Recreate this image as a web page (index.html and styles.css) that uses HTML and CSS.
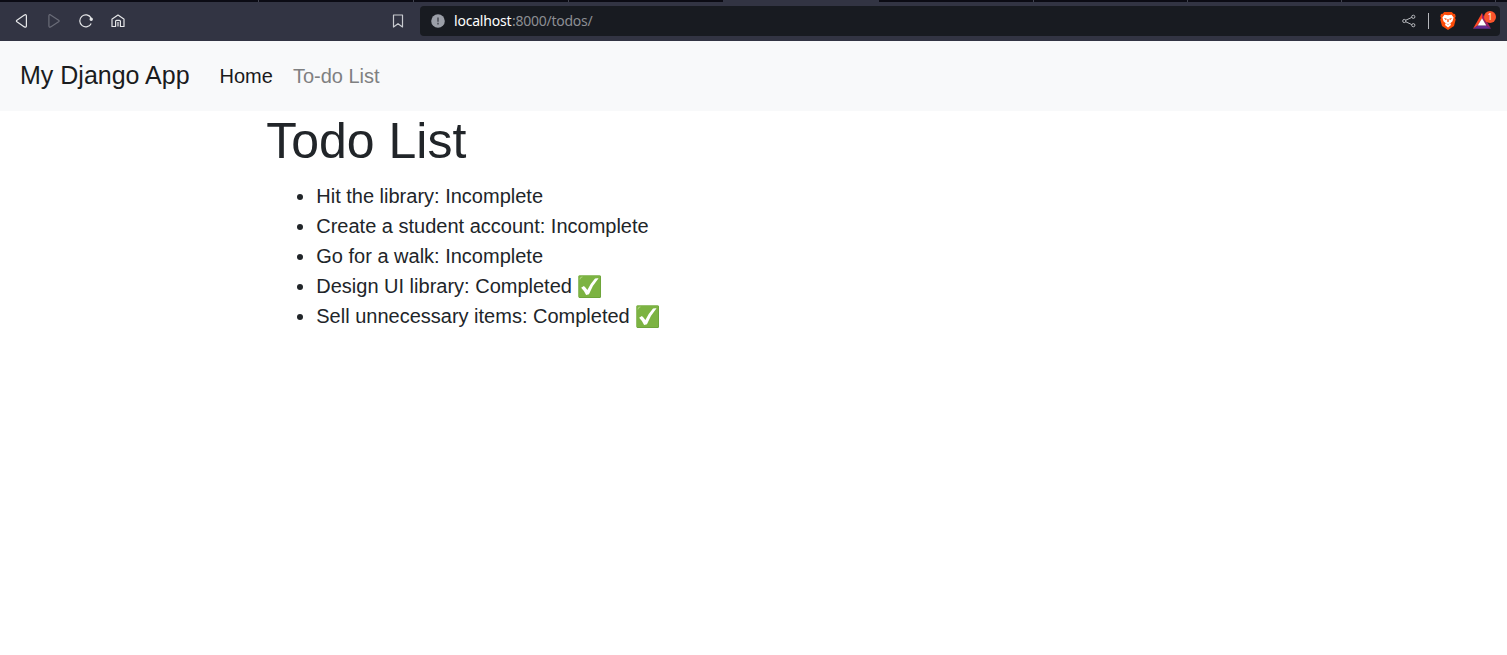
FILE: index.html
```html
<!DOCTYPE html>
<html lang="en">
<head>
<meta charset="utf-8">
<title>Todo List</title>
<link rel="stylesheet" href="styles.css">
</head>
<body>
<div class="tabs"><i class="tab first"></i><i class="tab"></i><i class="tab"></i><i class="tab before-active"></i><i class="tab active"></i><i class="tab"></i><i class="tab late"></i><i class="tab late"></i><i class="tab late"></i><i class="tab rest"></i></div>
<header class="toolbar">
  <div class="controls">
    <svg class="icon" viewBox="0 0 16 16"><path d="M2.9 7.2 10.4 2.1Q12.4 1 12.4 3V12.8Q12.4 14.8 10.4 13.9L2.9 8.7Q1.9 7.9 2.9 7.2Z"/></svg>
    <svg class="icon disabled" viewBox="0 0 16 16"><path d="M12.6 7.2 4.6 1.9Q2.9 1 2.9 3V12.8Q2.9 14.8 4.6 13.9L12.6 8.7Q13.7 7.9 12.6 7.2Z"/></svg>
    <svg class="icon" viewBox="0 0 16 16"><path d="M13 4.9A6 6 0 1 0 13.2 10.4"/><circle class="solid" cx="13.2" cy="6.2" r="1.1"/></svg>
    <svg class="icon" viewBox="0 0 16 16"><path d="M1.8 6.3 8 2 14.2 6.3M2 6V13.5H5.6V8.3Q5.6 7.4 6.5 7.4H9.5Q10.4 7.4 10.4 8.3V13.5H14V6M8 9V13.5"/></svg>
  </div>
  <svg class="icon bookmark" viewBox="0 0 16 16"><path d="M3.5 2H12.5V14L8 10.7 3.5 14Z"/></svg>
  <div class="address">
    <svg class="info" viewBox="0 0 14 14"><circle cx="7" cy="7" r="6.8" fill="#9b9fa8"/><path d="M6 3.5H8V7.8H6ZM6 8.8H8V10.5H6Z" fill="#5b5e67"/></svg>
    <span class="url"><span class="host">localhost</span><span class="path">:8000/todos/</span></span>
    <svg class="share" viewBox="0 0 14 14"><path d="M3.6 6.3 9.8 3.4M3.6 7.7 9.8 10.6"/><circle cx="2.3" cy="7" r="1.6"/><circle cx="11.3" cy="2.8" r="1.6"/><circle cx="11.3" cy="11.2" r="1.6"/></svg>
    <span class="divider"></span>
    <svg class="shield" viewBox="0 0 16 18"><path fill="#fb4b08" d="M4.2 0H11.8L13.4 1.7 15 2 15.7 4.5 15 6 15.7 7.5 14 14 8 18 2 14 .3 7.5 1 6 .3 4.5 1 2 2.6 1.7Z"/><path fill="#fff" d="M4.5 2.7 8 3.3 11.5 2.7 13.6 5.4 12.5 9.2 10.3 11.2 11 13 8 15.5 5 13 5.7 11.2 3.5 9.2 2.4 5.4Z"/><path fill="#fb4b08" d="M3.9 6 6.8 6.7 6 8.3ZM12.1 6 9.2 6.7 10 8.3ZM7.5 7H8.5L8.8 9.5 8 10.2 7.2 9.5ZM5.8 11.3 8 12.2 10.2 11.3 8 12.7Z"/></svg>
    <div class="rewards">
      <svg class="bat" viewBox="0 0 18 16"><path fill="#ff4724" d="M9 0V5.2L4.6 12.8 0 15.7Z"/><path fill="#9e1f63" d="M9 0 18 15.7 13.4 12.8 9 5.2Z"/><path fill="#662d91" d="M0 15.7 4.6 12.4H13.4L18 15.7Z"/><path fill="#fff" d="M9 5.2 13.3 12.4H4.7Z"/></svg>
      <span class="badge">1</span>
    </div>
  </div>
</header>
<nav class="navbar">
  <a class="brand">My Django App</a>
  <a class="link current">Home</a>
  <a class="link">To-do List</a>
</nav>
<main class="container">
  <h1>Todo List</h1>
  <ul>
    <li>Hit the library: Incomplete</li>
    <li>Create a student account: Incomplete</li>
    <li>Go for a walk: Incomplete</li>
    <li>Design UI library: Completed <svg class="check" viewBox="0 0 24 24"><rect x=".5" y=".5" width="23" height="23" rx="1.2" fill="#689f38"/><rect x=".5" y=".5" width="22.3" height="22.3" rx="1" fill="#7cb342"/><path d="M2 4.5Q2 2 4.5 2" stroke="#aed581" fill="none"/><path fill="#fff" d="M3.2 13 6 11.2Q7.4 12 9.6 15.3 12.8 8.8 17.4 3.7 19.2 3 21 3.4 14.7 10.6 11.2 19.7L8.3 20.3Q6.3 16 3.2 13Z"/></svg></li>
    <li>Sell unnecessary items: Completed <svg class="check" viewBox="0 0 24 24"><rect x=".5" y=".5" width="23" height="23" rx="1.2" fill="#689f38"/><rect x=".5" y=".5" width="22.3" height="22.3" rx="1" fill="#7cb342"/><path d="M2 4.5Q2 2 4.5 2" stroke="#aed581" fill="none"/><path fill="#fff" d="M3.2 13 6 11.2Q7.4 12 9.6 15.3 12.8 8.8 17.4 3.7 19.2 3 21 3.4 14.7 10.6 11.2 19.7L8.3 20.3Q6.3 16 3.2 13Z"/></svg></li>
  </ul>
</main>
</body>
</html>
```
FILE: styles.css
```css
* { box-sizing: border-box; }
body { margin: 0; background: #fff; color: #212529; font: 20px/30px "Liberation Sans", Arial, sans-serif; }
.tabs { display: flex; height: 2px; background: #0b0b14; }
.tab { width: 155px; flex: none; border-right: 1px solid #41434f; }
.tab.first { width: 259px; }
.tab.before-active { width: 154px; border: 0; }
.tab.active { width: 156px; background: #323443; border: 0; }
.tab.late { width: 154px; }
.tab.rest { flex: 1; width: auto; border: 0; }
.toolbar { display: flex; align-items: center; height: 39px; padding: 0 7px 1px 14px; background: #323443; }
.controls { display: flex; gap: 16px; }
.icon { display: block; width: 16px; height: 16px; fill: none; stroke: #e6e7e9; stroke-width: 1.2; stroke-linejoin: round; }
.icon.disabled { stroke: #6a6c78; }
.icon .solid { fill: #e6e7e9; }
.bookmark { margin-left: 264px; stroke: #c9cbd0; }
.address { display: flex; align-items: center; flex: 1; height: 30px; margin-left: 14px; padding: 0 4px 0 11px; background: #181b21; border-radius: 4px; }
.info { width: 14px; height: 14px; }
.url { display: flex; margin-left: 9px; flex: 1; font: 14px/20px "Noto Sans", sans-serif; }
.host { width: 58px; color: #fff; letter-spacing: -.2px; }
.path { color: #8c8e93; letter-spacing: -.26px; }
.share { width: 14px; height: 14px; fill: none; stroke: #b6b8bc; stroke-width: 1; }
.divider { width: 1px; height: 16px; margin: 0 11px 0 12px; background: #b6b8bc; }
.shield { width: 16px; height: 18px; }
.rewards { position: relative; width: 23px; height: 20px; margin-left: 17px; }
.bat { display: block; width: 18px; height: 16px; margin-top: 2px; }
.badge { position: absolute; left: 11px; top: 0; width: 12px; height: 12px; border-radius: 50%; background: #fb542b; color: #fff; font: 8px/12px "Noto Sans", sans-serif; text-align: center; }
.navbar { display: flex; align-items: center; height: 70px; padding: 0 20px; background: #f8f9fa; }
.brand { margin-right: 30px; padding-bottom: 2px; font-size: 25px; line-height: 38px; color: #1a1c1e; }
.link { margin-right: 20px; color: #7f8081; }
.link.current { color: #1a1a1b; }
.container { width: 974.5px; margin: 0 auto; }
h1 { margin: 0 0 10px; font-size: 50px; line-height: 60px; font-weight: 400; }
ul { margin: 0; padding-left: 50px; }
.check { width: 23.5px; height: 23.5px; margin: -4px 0 -4px .8px; vertical-align: -1px; }
```
